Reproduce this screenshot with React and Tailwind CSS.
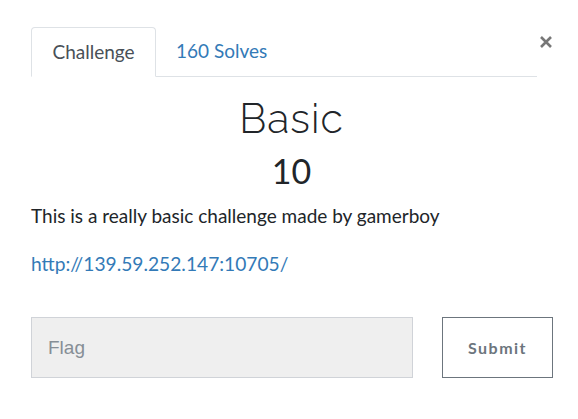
export default function App() {
  return (
    <div className="min-h-screen bg-white font-['Lato','Liberation_Sans',sans-serif] text-[#212529]">
      <div className="flex items-start pl-[31px] pr-[24px] pt-[27px]">
        <div className="flex flex-1 border-b border-[#dee2e6]">
          <div className="mb-[-1px] flex h-[50px] w-[125px] items-center justify-center rounded-t border border-[#dee2e6] border-b-white bg-white text-[19px] text-[#495057]">
            Challenge
          </div>
          <div className="flex h-[49px] items-center px-[20px] text-[19px] text-[#337ab7]">
            160 Solves
          </div>
        </div>
        <button className="mt-[2px] flex h-[26px] w-[17px] items-center justify-center text-[#777]">
          <svg width="14" height="14" viewBox="0 0 14 14">
            <path d="M2 2L12 12M12 2L2 12" stroke="currentColor" strokeWidth="2.6" />
          </svg>
        </button>
      </div>

      <div className="pl-[31px] pr-[26px]">
        <h1 className="mt-[19px] text-center font-['Raleway','Lato',sans-serif] text-[41px] font-light leading-[46px] tracking-[1px]">
          Basic
        </h1>
        <h2 className="mt-[9px] text-center text-[34px] leading-[40px]">10</h2>
        <p className="mt-[12px] text-[19px] leading-[26px]">
          This is a really basic challenge made by gamerboy
        </p>
        <a className="mt-[22px] block text-[19.2px] leading-[26px] text-[#337ab7]" href="#">
          http://139.59.252.147:10705/
        </a>

        <div className="mt-[40px] flex items-center">
          <input
            className="h-[61px] w-[382px] shrink-0 border border-[#d0d3d8] bg-[#efefef] px-[16px] font-['Liberation_Sans',sans-serif] text-[19px] text-[#6c757d] placeholder:text-[#868e96] outline-none"
            placeholder="Flag"
          />
          <button className="ml-[29px] h-[61px] w-[111px] shrink-0 border border-[#6c757d] bg-white text-[16px] font-bold tracking-[1.5px] text-[#6c757d]">
            Submit
          </button>
        </div>
      </div>
    </div>
  );
}
